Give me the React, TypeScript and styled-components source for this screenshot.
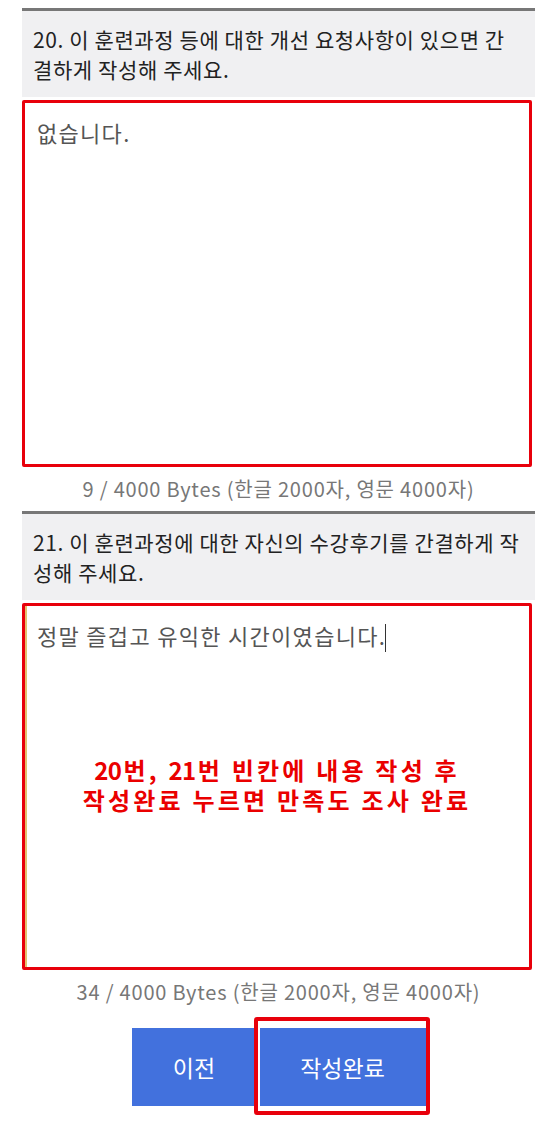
import React from 'react';
import styled, {createGlobalStyle} from "styled-components";

const GlobalStyle = createGlobalStyle`
  body {
    margin: 0;
    background: #ffffff;
    font-family: "Noto Sans CJK KR", "Noto Sans", sans-serif;
  }
`

const Page = styled.main`
  width: 513px;
  padding: 8px 0 20px 22px;
`

const Section = styled.section`
  border-top: 3px solid #777777;
`

const Question = styled.h3`
  margin: 0;
  padding: 13px 14px 13px 11px;
  background: #f0f0f2;
  color: #222222;
  font-size: 21px;
  font-weight: 400;
  line-height: 30px;
  letter-spacing: 0.6px;
  word-break: break-all;
`

const AnswerBox = styled.div`
  position: relative;
  box-sizing: border-box;
  width: 510px;
  height: 367px;
  margin-top: 3px;
  border: 3px solid #e8000b;
  border-radius: 2px;
  background: #ffffff;
`

const AnswerText = styled.div<{ $focused?: boolean }>`
  box-sizing: border-box;
  height: 100%;
  padding: 13px 12px;
  color: #555555;
  font-size: 22px;
  line-height: 32px;
  letter-spacing: 1.3px;
  box-shadow: ${p => p.$focused ? 'inset 2px 0 0 #e2c16f' : 'none'};
`

const Caret = styled.span`
  display: inline-block;
  width: 1px;
  height: 28px;
  margin-left: -1px;
  vertical-align: -7px;
  background: #333333;
`

const Notice = styled.p`
  position: absolute;
  top: 149px;
  left: 0;
  right: 0;
  margin: 0;
  color: #ea0000;
  font-size: 24px;
  font-weight: 700;
  line-height: 30px;
  letter-spacing: 3.2px;
  text-align: center;
`

const Num = styled.span`
  display: inline-block;
  letter-spacing: -0.5px;
  margin-right: 2px;
`

const Counter = styled.p`
  margin: 0;
  padding: 9px 0 10px;
  color: #777777;
  font-size: 20px;
  line-height: 25px;
  letter-spacing: 0.8px;
  text-align: center;
`

const Buttons = styled.div`
  display: flex;
  justify-content: center;
  gap: 3px;
  padding-top: 14px;
`

const Marked = styled.span`
  position: relative;
  display: flex;

  &::after {
    content: '';
    position: absolute;
    top: -11px;
    bottom: -9px;
    left: -6px;
    right: -4px;
    border: 4px solid #e8000b;
    border-radius: 3px;
  }
`

const Button = styled.button<{ $width: number }>`
  width: ${p => p.$width}px;
  height: 78px;
  border: none;
  background: #4271dd;
  color: #ffffff;
  font-family: "Noto Sans CJK KR", "Noto Sans", sans-serif;
  font-size: 23px;
  cursor: pointer;
`

const App: React.FC = () => {
    return (
        <>
            <GlobalStyle/>
            <Page>
                <Section>
                    <Question>20. 이 훈련과정 등에 대한 개선 요청사항이 있으면 간결하게 작성해 주세요.</Question>
                    <AnswerBox>
                        <AnswerText>없습니다.</AnswerText>
                    </AnswerBox>
                    <Counter>9 / 4000 Bytes (한글 2000자, 영문 4000자)</Counter>
                </Section>
                <Section>
                    <Question>21. 이 훈련과정에 대한 자신의 수강후기를 간결하게 작성해 주세요.</Question>
                    <AnswerBox>
                        <AnswerText $focused>정말 즐겁고 유익한 시간이였습니다.<Caret/></AnswerText>
                        <Notice>
                            <Num>20</Num>번, <Num>21</Num>번 빈칸에 내용 작성 후<br/>
                            작성완료 누르면 만족도 조사 완료
                        </Notice>
                    </AnswerBox>
                    <Counter>34 / 4000 Bytes (한글 2000자, 영문 4000자)</Counter>
                </Section>
                <Buttons>
                    <Button $width={125}>이전</Button>
                    <Marked>
                        <Button $width={166}>작성완료</Button>
                    </Marked>
                </Buttons>
            </Page>
        </>
    )
}

export default App
